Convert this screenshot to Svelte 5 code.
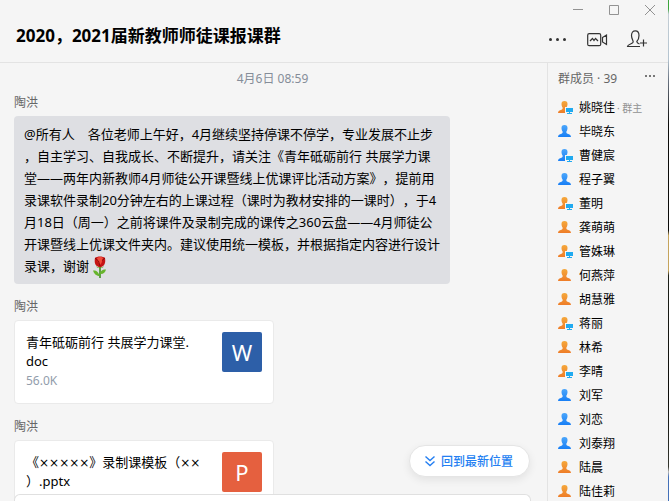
<script>
	const lines = [
		'@所有人　各位老师上午好，4月继续坚持停课不停学，专业发展不止步',
		'，自主学习、自我成长、不断提升，请关注《青年砥砺前行 共展学力课',
		'堂——两年内新教师4月师徒公开课暨线上优课评比活动方案》，提前用',
		'录课软件录制20分钟左右的上课过程（课时为教材安排的一课时），于4',
		'月18日（周一）之前将课件及录制完成的课传之360云盘——4月师徒公',
		'开课暨线上优课文件夹内。建议使用统一模板，并根据指定内容进行设计',
		'录课，谢谢'
	];

	const files = [
		{ name: ['青年砥砺前行 共展学力课堂.', 'doc'], size: '56.0K', letter: 'W', type: 'word' },
		{ name: ['《×××××》录制课模板（××', '）.pptx'], size: '', letter: 'P', type: 'ppt' }
	];

	const members = [
		{ name: '姚晓佳', color: 'orange', pc: true, owner: true },
		{ name: '毕晓东', color: 'blue' },
		{ name: '曹健宸', color: 'blue', pc: true },
		{ name: '程子翼', color: 'blue' },
		{ name: '董明', color: 'orange', pc: true },
		{ name: '龚萌萌', color: 'orange' },
		{ name: '管姝琳', color: 'orange', pc: true },
		{ name: '何燕萍', color: 'orange' },
		{ name: '胡慧雅', color: 'orange' },
		{ name: '蒋丽', color: 'orange', pc: true },
		{ name: '林希', color: 'orange' },
		{ name: '李晴', color: 'orange', pc: true },
		{ name: '刘军', color: 'blue' },
		{ name: '刘恋', color: 'blue' },
		{ name: '刘泰翔', color: 'blue' },
		{ name: '陆晨', color: 'orange' },
		{ name: '陆佳莉', color: 'orange' }
	];
</script>

<div class="window">
	<header>
		<div class="controls">
			<button aria-label="最小化"><svg width="12" height="12"><path d="M1 5.500h10" /></svg></button>
			<button aria-label="最大化"><svg width="12" height="12"><path d="M1.500 1.500h9v9h-9z" /></svg></button>
			<button aria-label="关闭"><svg width="12" height="12"><path d="M1 1l10 10M11 1L1 11" /></svg></button>
		</div>
		<div class="bar">
			<h1>2020，2021届新教师师徒课报课群</h1>
			<div class="tools">
				<button aria-label="更多">
					<svg class="dots" width="20" height="20"><circle cx="2.500" cy="10.500" r="1.500" /><circle cx="9.500" cy="10.500" r="1.500" /><circle cx="16.500" cy="10.500" r="1.500" /></svg>
				</button>
				<button aria-label="视频通话">
					<svg width="22" height="20">
						<rect x="1.700" y="4.700" width="13" height="12" rx="1.500" />
						<path d="M4 12l2.500-2.500L8 11.500l1.500-2 2.500 2.500M16.500 8.500l4-2.500v9.500l-4-2.500z" />
					</svg>
				</button>
				<button aria-label="邀请成员">
					<svg width="22" height="20">
						<path d="M14 17.500H1.500c0-2.500 5.700-2.500 5.700-4.500C7.200 11.500 5.500 9.500 5.500 6.500c0-3 1.500-4.700 3.800-4.700s3.700 1.700 3.700 4.700c0 2.500-.8 4.500-2.200 6 0 1.200 1 1.900 2.700 2.500M14 14h7M17.500 10.500v7" />
					</svg>
				</button>
			</div>
		</div>
	</header>

	<div class="body">
		<main>
			<p class="time">4月6日 08:59</p>
			<section>
				<h2>陶洪</h2>
				<div class="bubble">
					{#each lines as line, i}
						<p>
							{line}
							{#if i == lines.length - 1}
								<svg class="rose" width="16" height="23" viewBox="0 0 16 23" role="img" aria-label="玫瑰">
									<path d="M8 10v12" stroke="#3f8f20" stroke-width="1.600" />
									<path d="M7.500 20C4 20 2 17.500 1 14.500c3-.5 6 1.500 6.500 5.500zM8 18c0-3 3-5 6-4.500-.5 3-3 5-6 4.500z" fill="#67b52c" />
									<path d="M3 2c2-2 8-2 10 0 .7 4 .2 8-5 9.500C2.500 10 2.200 6 3 2z" fill="#c51414" />
									<path d="M5 2c2-1.500 5-1.500 6 0L9.500 7 8 9 6 6z" fill="#f04a38" />
									<path d="M3 2l3.500 3L8 10M13 2l-3 2.500" stroke="#8d0707" fill="none" />
									<path d="M4 10c2 2 6 2 8 0-1 3-7 3-8 0z" fill="#5a9e24" />
								</svg>
							{/if}
						</p>
					{/each}
				</div>
			</section>
			{#each files as file}
				<section>
					<h2>陶洪</h2>
					<div class="card">
						<div class="info">
							{#each file.name as part}
								<p>{#each part.split(/(×+)/) as piece}{#if piece[0] == '×'}<span class="cross">{piece}</span>{:else}{piece}{/if}{/each}</p>
							{/each}
							<p class="size">{file.size}</p>
						</div>
						<span class="badge {file.type}">{file.letter}</span>
					</div>
				</section>
			{/each}
			<button class="latest">
				<svg width="12" height="12"><path d="M1.500 1.500L6 5.500l4.500-4M1.500 6.500l4.500 4 4.500-4" /></svg>
				回到最新位置
			</button>
			<div class="editor"></div>
		</main>

		<aside>
			<div class="head">
				<h2>群成员 · 39</h2>
				<button aria-label="成员选项">
					<svg width="12" height="4"><path d="M1 1h2v2H1zM5 1h2v2H5zM9 1h2v2H9z" /></svg>
				</button>
			</div>
			<ul>
				{#each members as member}
					<li>
						<svg class={member.color} width="16" height="14" viewBox="0 0 16 14">
							<defs>
								<linearGradient id="orange" x2="0" y2="1"><stop stop-color="#f5a83b" /><stop offset="1" stop-color="#ee7d28" /></linearGradient>
								<linearGradient id="blue" x2="0" y2="1"><stop stop-color="#4ba6fb" /><stop offset="1" stop-color="#187ff5" /></linearGradient>
							</defs>
							<path d="M6.500 1C8.700 1 9.500 2.300 9.500 4c0 1.600-.5 2.700-1.200 3.700 0 1 .4 1.600 1.300 2 1.800.8 3.400 1.100 3.400 3.300H0c0-2.200 1.600-2.500 3.400-3.300.9-.4 1.300-1 1.300-2C4 6.700 3.500 5.600 3.500 4c0-1.700.8-3 3-3z" />
							{#if member.pc}
								<path class="gap" d="M7 7h9v7H7z" />
								<path class="pc" d="M8 8h7v4H8zM11 12h1v1h2v1H9v-1h2z" />
							{/if}
						</svg>
						<span>{member.name}</span>
						{#if member.owner}
							<small>· 群主</small>
						{/if}
					</li>
				{/each}
			</ul>
		</aside>
	</div>
</div>

<style>
	:global(body) {
		margin: 0;
		overflow: hidden;
	}

	.window {
		display: flex;
		flex-direction: column;
		box-sizing: border-box;
		height: 100vh;
		border-right: 1px solid;
		border-image: linear-gradient(#3ca53c 2%, #c3cdd4 3%, #b4c4d0 12%, #6b7583 16%, #0c0c0a 25%, #0c0c0a 46%, #c5a45c 47%, #c5a45c 54%, #1d2019 55%, #0c0c0a 80%, #34372f 93%, #b8b8b8 94%, #4470b8 95%) 1;
		background: #f5f5f5;
		color: #000;
		font-family: "Noto Sans", "Noto Sans CJK SC", sans-serif;
		text-spacing-trim: space-all;
	}

	h1, h2, p, ul {
		margin: 0;
		padding: 0;
	}

	button {
		display: flex;
		align-items: center;
		padding: 0;
		border: 0;
		background: none;
		font: inherit;
		cursor: pointer;
	}

	header {
		flex: none;
		height: 62px;
		border-bottom: 1px solid #e3e3e3;
	}

	.controls {
		display: flex;
		justify-content: flex-end;
		gap: 24px;
		height: 20px;
		padding-right: 12px;
	}

	.controls svg {
		fill: none;
		stroke: #929292;
	}

	.bar {
		display: flex;
		justify-content: space-between;
		padding: 4px 20px 0 16px;
	}

	h1 {
		font-size: 17px;
		line-height: 24px;
		white-space: nowrap;
	}

	.tools {
		display: flex;
		align-items: center;
		gap: 18px;
		padding-top: 5px;
	}

	.tools svg {
		fill: none;
		stroke: #333;
		stroke-width: 1.2;
	}

	.tools .dots {
		fill: #333;
		stroke: none;
	}

	.body {
		display: flex;
		flex: 1;
		min-height: 0;
	}

	main {
		position: relative;
		flex: 1;
		min-width: 0;
		padding: 4px 16px 0 14px;
		overflow: hidden;
	}

	.time {
		color: #858d99;
		font-size: 12px;
		line-height: 24px;
		text-align: center;
	}

	h2 {
		color: #666;
		font-size: 12px;
		font-weight: 400;
		line-height: 24px;
	}

	section {
		margin-bottom: 11px;
	}

	.bubble {
		box-sizing: border-box;
		max-width: 436px;
		margin-top: 1px;
		padding: 7px 10px;
		border-radius: 4px;
		background: #dedfe3;
		font-size: 13px;
		line-height: 22px;
		white-space: nowrap;
	}

	.bubble p {
		height: 22px;
	}

	.rose {
		vertical-align: middle;
	}

	.card {
		display: flex;
		justify-content: space-between;
		box-sizing: border-box;
		max-width: 260px;
		height: 84px;
		margin-top: 1px;
		padding: 11px;
		border: 1px solid #eaeaea;
		border-radius: 4px;
		background: #fff;
	}

	.info {
		padding-top: 1px;
		font-size: 13px;
		line-height: 19px;
		white-space: nowrap;
	}

	.info p {
		height: 19px;
	}

	.info .size {
		color: #929dab;
		font-size: 12px;
	}

	.cross {
		font-family: "DejaVu Sans", sans-serif;
		font-size: 12px;
	}

	.badge {
		width: 40px;
		height: 40px;
		border-radius: 2px;
		color: #fff;
		font-size: 22px;
		line-height: 40px;
		text-align: center;
	}

	.word {
		background: #2d5fa8;
	}

	.ppt {
		background: #e5603f;
	}

	.latest {
		position: absolute;
		right: 17px;
		bottom: 24px;
		gap: 5px;
		height: 32px;
		padding: 0 16px 0 14px;
		border: 1px solid #e5e5e5;
		border-radius: 16px;
		background: #fff;
		box-shadow: 0 3px 8px rgba(0, 0, 0, 0.08);
		color: #247ff2;
		font-size: 12px;
		font-weight: 500;
	}

	.latest svg {
		fill: none;
		stroke: #247ff2;
		stroke-width: 1.4;
	}

	.editor {
		position: absolute;
		right: 16px;
		bottom: 0;
		left: 14px;
		height: 6px;
		border: 1px solid #e0e0e0;
		border-bottom: 0;
		border-radius: 6px 6px 0 0;
		background: #fff;
	}

	aside {
		flex: none;
		width: 110px;
		padding: 4px 0 0 10px;
		border-left: 1px solid #e3e3e3;
		overflow: hidden;
	}

	.head {
		display: flex;
		justify-content: space-between;
		padding-right: 12px;
	}

	.head button {
		height: 18px;
	}

	.head svg {
		fill: #777;
	}

	ul {
		padding-top: 4px;
		list-style: none;
	}

	li {
		display: flex;
		align-items: center;
		height: 24px;
		font-size: 12px;
		white-space: nowrap;
	}

	li span {
		margin-left: 5px;
	}

	small {
		margin-left: 2px;
		color: #929292;
		font-size: 10px;
	}

	.orange {
		fill: url(#orange);
	}

	.blue {
		fill: url(#blue);
	}

	.gap {
		fill: #f5f5f5;
	}

	.pc {
		fill: #20aaf0;
	}
</style>
